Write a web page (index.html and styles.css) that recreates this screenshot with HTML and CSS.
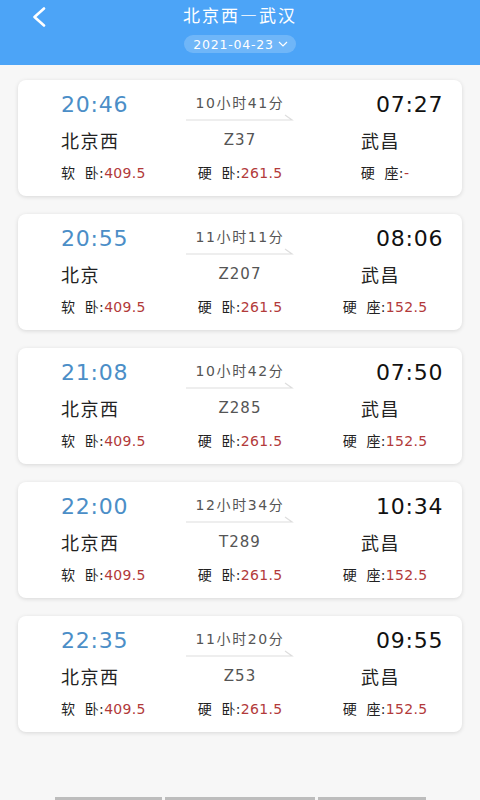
FILE: index.html
```html
<!DOCTYPE html>
<html lang="zh-CN">
  <head>
    <meta charset="UTF-8" />
    <meta name="viewport" content="width=device-width, initial-scale=1.0" />
    <title>车次列表</title>
    <link rel="stylesheet" href="styles.css">
  </head>
  <body>
    <header class="topbar">
      <a class="back" href="#">
        <svg width="16" height="20" viewBox="0 0 16 20">
          <path d="M13 1.5 L3.5 10 L13 18.5" fill="none" stroke="#fff" stroke-width="2.6" stroke-linecap="round" stroke-linejoin="round"/>
        </svg>
      </a>
      <div class="title">北京西—武汉</div>
      <div class="date-pill">
        2021-04-23
        <svg width="10" height="6" viewBox="0 0 10 6">
          <path d="M1 1 L5 5 L9 1" fill="none" stroke="#fff" stroke-width="1.2"/>
        </svg>
      </div>
    </header>

    <main class="list" id="list"></main>

    <div class="bottom-bar">
      <span class="seg seg-a"></span>
      <span class="seg seg-b"></span>
      <span class="seg seg-c"></span>
    </div>

    <script>
      const trains = [
        { dep: '20:46', arr: '07:27', from: '北京西', to: '武昌', dur: '10小时41分', no: 'Z37', soft: '409.5', hard: '261.5', seat: '-' },
        { dep: '20:55', arr: '08:06', from: '北京', to: '武昌', dur: '11小时11分', no: 'Z207', soft: '409.5', hard: '261.5', seat: '152.5' },
        { dep: '21:08', arr: '07:50', from: '北京西', to: '武昌', dur: '10小时42分', no: 'Z285', soft: '409.5', hard: '261.5', seat: '152.5' },
        { dep: '22:00', arr: '10:34', from: '北京西', to: '武昌', dur: '12小时34分', no: 'T289', soft: '409.5', hard: '261.5', seat: '152.5' },
        { dep: '22:35', arr: '09:55', from: '北京西', to: '武昌', dur: '11小时20分', no: 'Z53', soft: '409.5', hard: '261.5', seat: '152.5' }
      ];

      const list = document.getElementById('list');

      trains.forEach((t) => {
        const card = document.createElement('div');
        card.className = 'card';
        card.innerHTML = `
          <div class="dep-time">${t.dep}</div>
          <div class="duration">
            <span class="dur-text">${t.dur}</span>
            <svg class="dur-line" width="108" height="7" viewBox="0 0 108 7">
              <path d="M0 6 H106 L99 1" fill="none" stroke="#dedede" stroke-width="1.2"/>
            </svg>
          </div>
          <div class="arr-time">${t.arr}</div>
          <div class="station">${t.from}</div>
          <div class="train-no">${t.no}</div>
          <div class="station station-arr">${t.to}</div>
          <div class="price">软&nbsp;&nbsp;卧:<span class="val">${t.soft}</span></div>
          <div class="price price-mid">硬&nbsp;&nbsp;卧:<span class="val">${t.hard}</span></div>
          <div class="price price-right">硬&nbsp;&nbsp;座:<span class="val">${t.seat}</span></div>
        `;
        list.appendChild(card);
      });
    </script>
  </body>
</html>
```

FILE: styles.css
```css
body {
  margin: 0;
  height: 100vh;
  display: flex;
  flex-direction: column;
  overflow: hidden;
  background-color: #f7f7f7;
  font-family: "DejaVu Sans", "Noto Sans CJK SC", sans-serif;
}
.topbar {
  position: relative;
  height: 65px;
  box-sizing: border-box;
  padding-top: 4px;
  display: flex;
  flex-direction: column;
  align-items: center;
  background-color: #4ca4f7;
  color: #fff;
}
.back {
  position: absolute;
  left: 31px;
  top: 7px;
  display: block;
}
.title {
  font-family: "Noto Sans CJK SC", sans-serif;
  font-size: 17px;
  line-height: 22px;
  letter-spacing: 2px;
}
.date-pill {
  margin-top: 9px;
  height: 18px;
  padding: 0 8px 0 9px;
  display: flex;
  align-items: center;
  gap: 4px;
  border-radius: 9px;
  background-color: rgba(255, 255, 255, 0.2);
  font-size: 12.5px;
  letter-spacing: 0.8px;
}
.list {
  flex: 1;
  padding: 15px 18px 0;
  display: flex;
  flex-direction: column;
  gap: 18px;
}
.card {
  height: 116px;
  box-sizing: border-box;
  padding: 8px 0 10px 43px;
  display: grid;
  grid-template-columns: 124px 110px 1fr;
  grid-template-rows: 33px 37px 28px;
  align-items: center;
  background-color: #fff;
  border-radius: 8px;
  box-shadow: 0 1px 4px rgba(0, 0, 0, 0.13);
}
.dep-time,
.arr-time {
  font-size: 22px;
  letter-spacing: 0.8px;
  color: #4b8ec7;
}
.arr-time {
  margin-left: 81px;
  color: #111;
}
.duration {
  align-self: end;
  display: flex;
  flex-direction: column;
  align-items: center;
  font-size: 14px;
  letter-spacing: 1.6px;
  color: #555;
}
.dur-text {
  line-height: 22px;
}
.dur-line {
  display: block;
}
.station {
  font-family: "Noto Sans CJK SC", sans-serif;
  font-size: 18px;
  letter-spacing: 1.5px;
  color: #222;
}
.station-arr {
  margin-left: 66px;
}
.train-no {
  text-align: center;
  font-size: 15px;
  letter-spacing: 1px;
  color: #555;
}
.price {
  font-size: 14px;
  letter-spacing: 0.3px;
  color: #222;
  white-space: nowrap;
}
.price-mid {
  text-align: center;
}
.price-right {
  padding-left: 13px;
  text-align: center;
}
.price .val {
  color: #b23a3a;
}
.bottom-bar {
  height: 3px;
  padding-left: 55px;
  display: flex;
  gap: 3px;
}
.seg {
  height: 3px;
  background-color: #bdbdbd;
}
.seg-a {
  width: 107px;
}
.seg-b {
  width: 150px;
}
.seg-c {
  width: 108px;
}
```
